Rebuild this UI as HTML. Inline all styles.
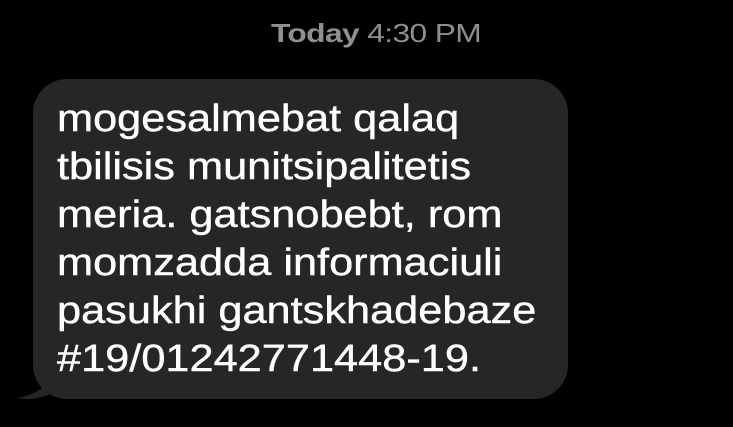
<!DOCTYPE html>
<html><head><style>
html,body{margin:0;padding:0;background:#000;width:733px;height:427px;overflow:hidden;font-family:"Liberation Sans",sans-serif;}
.ts{position:absolute;left:271px;top:18px;font-size:26px;line-height:30px;color:#8e8e93;white-space:nowrap;transform:scaleX(1.22);transform-origin:left top;letter-spacing:-0.5px}
.ts b{font-weight:bold}
.bub{position:absolute;left:33px;top:79px;width:535px;height:320px;background:#262628;border-radius:34px;}
.tail{position:absolute;left:0;top:0}
.txt{position:absolute;left:57px;top:95px;font-size:38px;line-height:48px;color:#fff;white-space:nowrap;transform:scaleX(1.14);transform-origin:left top;-webkit-text-stroke:0.4px #fff}
</style></head><body>
<div class="ts"><b>Today</b> 4:30 PM</div>
<svg class="tail" width="120" height="427"><path d="M48 350 L48 378 Q44 393 17 398 Q38 402 58 390 Q70 399 90 399 L90 350 Z" fill="#262628"/></svg>
<div class="bub"></div>
<div class="txt">mogesalmebat qalaq<br>tbilisis munitsipalitetis<br>meria. gatsnobebt, rom<br>momzadda informaciuli<br>pasukhi gantskhadebaze<br>#19/01242771448-19.</div>
</body></html>
